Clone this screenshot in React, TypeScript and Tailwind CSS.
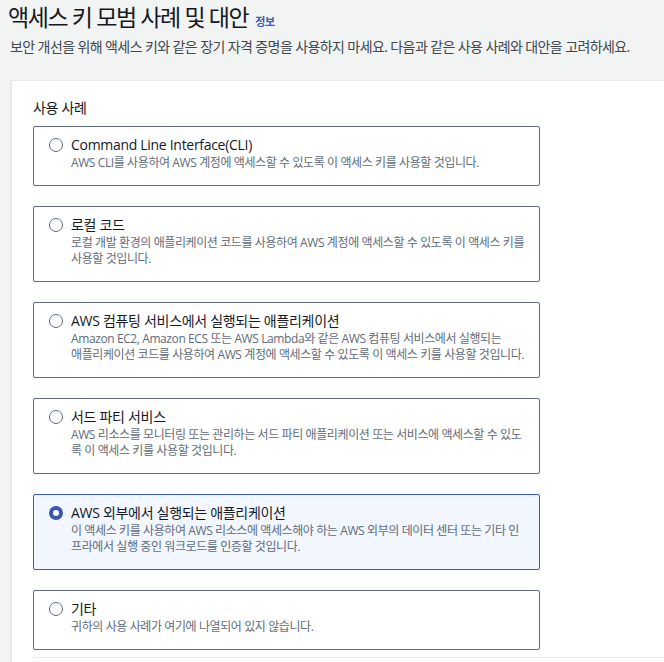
import { useState } from 'react';

const FONT = { fontFamily: "'Open Sans', 'Noto Sans CJK KR', sans-serif" };

const options = [
    { id: 'cli', title: 'Command Line Interface(CLI)', desc: 'AWS CLI를 사용하여 AWS 계정에 액세스할 수 있도록 이 액세스 키를 사용할 것입니다.' },
    { id: 'local', title: '로컬 코드', desc: '로컬 개발 환경의 애플리케이션 코드를 사용하여 AWS 계정에 액세스할 수 있도록 이 액세스 키를 사용할 것입니다.' },
    { id: 'compute', title: 'AWS 컴퓨팅 서비스에서 실행되는 애플리케이션', desc: 'Amazon EC2, Amazon ECS 또는 AWS Lambda와 같은 AWS 컴퓨팅 서비스에서 실행되는\n애플리케이션 코드를 사용하여 AWS 계정에 액세스할 수 있도록 이 액세스 키를 사용할 것입니다.' },
    { id: 'third', title: '서드 파티 서비스', desc: 'AWS 리소스를 모니터링 또는 관리하는 서드 파티 애플리케이션 또는 서비스에 액세스할 수 있도록 이 액세스 키를 사용할 것입니다.' },
    { id: 'outside', title: 'AWS 외부에서 실행되는 애플리케이션', desc: '이 액세스 키를 사용하여 AWS 리소스에 액세스해야 하는 AWS 외부의 데이터 센터 또는 기타 인프라에서 실행 중인 워크로드를 인증할 것입니다.' },
    { id: 'other', title: '기타', desc: '귀하의 사용 사례가 여기에 나열되어 있지 않습니다.' },
];

export default function App() {
    const [selected, setSelected] = useState('outside');

    return (
        <div className="w-[664px] h-[662px] overflow-hidden bg-[#f2f3f3] text-[#16191f]" style={FONT}>
            {/* Header */}
            <div className="pl-2 pt-[2px]">
                <div className="flex items-baseline gap-[7px]">
                    <h1 className="text-[23px] leading-[30px] font-normal tracking-[-1.4px]">액세스 키 모범 사례 및 대안</h1>
                    <a className="text-[11px] font-bold text-[#3a5cc0] tracking-[-0.3px]">정보</a>
                </div>
                <p className="mt-[5px] pl-[2px] text-[14px] leading-5 text-[#414750] tracking-[-0.6px]">
                    보안 개선을 위해 액세스 키와 같은 장기 자격 증명을 사용하지 마세요. 다음과 같은 사용 사례와 대안을 고려하세요.
                </p>
            </div>

            {/* Panel */}
            <div className="mt-[23px] ml-[11px] bg-white border-l border-t border-[#e6e8ea] pl-[21px] pt-[17px] shadow-[0_1px_2px_rgba(0,0,0,0.08)] h-[600px]">
                <p className="text-[14px] leading-5 mb-[8px] tracking-[-0.3px]">사용 사례</p>
                <div className="flex flex-col gap-5 w-[507px]">
                    {options.map((o) => {
                        const active = selected === o.id;
                        return (
                            <label
                                key={o.id}
                                onClick={() => setSelected(o.id)}
                                className={`flex gap-[8px] rounded-[2px] border pl-[15px] pr-[14px] pt-2 pb-[14px] cursor-pointer ${active ? 'border-[#3b5cb8] bg-[#f1f6ff]' : 'border-[#5f6b7a] bg-white'}`}
                            >
                                <span className="pt-[3px] shrink-0">
                                    {active ? (
                                        <span className="block w-[14px] h-[14px] rounded-full border-[4px] border-[#3b55b0] bg-white" />
                                    ) : (
                                        <span className="block w-[14px] h-[14px] rounded-full border-[1.5px] border-[#5f6b7a] bg-white" />
                                    )}
                                </span>
                                <span className="flex flex-col">
                                    <span className="text-[14px] leading-5 font-normal text-[#16191f] tracking-[-0.3px]">{o.title}</span>
                                    <span className="text-[12px] leading-4 text-[#5f6b7a] tracking-[-0.4px] whitespace-pre-line">{o.desc}</span>
                                </span>
                            </label>
                        );
                    })}
                </div>
                <div className="mt-[7px] border-t border-[#e9ebed]" />
            </div>
        </div>
    );
}
